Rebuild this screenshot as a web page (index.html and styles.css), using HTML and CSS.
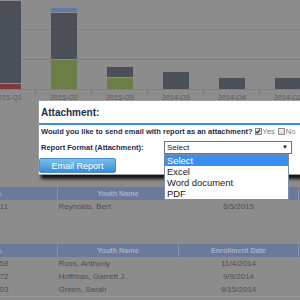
FILE: index.html
```html
<!DOCTYPE html>
<html lang="en">
<head>
  <meta charset="UTF-8">
  <meta name="viewport" content="width=device-width, initial-scale=1.0">
  <title>Enrollment Report</title>
  <link rel="stylesheet" href="styles.css">
</head>
<body>

  <div class="chart">
    <div class="plot">
      <div class="cat"><div class="bar">
        <div class="seg dark" style="height: 83px"></div>
        <div class="seg red" style="height: 6px"></div>
      </div></div>
      <div class="cat"><div class="bar">
        <div class="seg blue" style="height: 5px"></div>
        <div class="seg dark" style="height: 47px"></div>
        <div class="seg green" style="height: 30px"></div>
      </div></div>
      <div class="cat"><div class="bar">
        <div class="seg dark" style="height: 11px"></div>
        <div class="seg green" style="height: 12px"></div>
      </div></div>
      <div class="cat"><div class="bar">
        <div class="seg dark" style="height: 18px"></div>
      </div></div>
      <div class="cat"><div class="bar">
        <div class="seg dark" style="height: 12px"></div>
      </div></div>
      <div class="cat"><div class="bar">
        <div class="seg dark" style="height: 12px"></div>
      </div></div>
    </div>
    <div class="labels">
      <div class="label">2015-Q1</div>
      <div class="label">2015-Q2</div>
      <div class="label">2015-Q3</div>
      <div class="label">2014-Q3</div>
      <div class="label">2014-Q4</div>
      <div class="label">2014-Q2</div>
    </div>
  </div>

  <div class="tables">
    <table class="grid">
      <thead>
        <tr>
          <th class="c-id">No.</th>
          <th class="c-name">Youth Name</th>
          <th class="c-date">Enrollment Date</th>
          <th class="c-start">Start Date</th>
        </tr>
      </thead>
      <tbody>
        <tr>
          <td class="c-id">10011</td>
          <td class="c-name">Reynolds, Bert</td>
          <td class="c-date">6/5/2015</td>
          <td class="c-start">6/8/2015</td>
        </tr>
      </tbody>
    </table>

    <table class="grid second">
      <thead>
        <tr>
          <th class="c-id">No.</th>
          <th class="c-name">Youth Name</th>
          <th class="c-date">Enrollment Date</th>
          <th class="c-start">Start Date</th>
        </tr>
      </thead>
      <tbody>
        <tr>
          <td class="c-id">10158</td>
          <td class="c-name">Ross, Anthony</td>
          <td class="c-date">11/4/2014</td>
          <td class="c-start">11/18/2014</td>
        </tr>
        <tr>
          <td class="c-id">10172</td>
          <td class="c-name">Hoffman, Garrett J.</td>
          <td class="c-date">9/9/2014</td>
          <td class="c-start">9/16/2014</td>
        </tr>
        <tr>
          <td class="c-id">10203</td>
          <td class="c-name">Green, Sarah</td>
          <td class="c-date">9/15/2014</td>
          <td class="c-start">9/22/2014</td>
        </tr>
      </tbody>
    </table>
  </div>

  <div class="dialog">
    <div class="dialog-title">Attachment:</div>
    <div class="dialog-body">
      <div class="question">
        Would you like to send email with report as an attachment?
        <span class="check on">
          <svg width="7" height="7" viewBox="0 0 7 7"><path d="M1.2 3.6 L2.8 5.2 L5.9 1.3" fill="none" stroke="#222" stroke-width="1.3"/></svg>
        </span><span class="opt">Yes</span><span class="check"></span><span class="opt">No</span>
      </div>
      <div class="format">
        <span class="format-label">Report Format (Attachment):</span>
        <div class="select">
          Select<span class="arrow">&#9660;</span>
          <ul class="options">
            <li class="active">Select</li>
            <li>Excel</li>
            <li>Word document</li>
            <li>PDF</li>
          </ul>
        </div>
      </div>
      <button class="button">Email Report</button>
    </div>
  </div>

</body>
</html>
```

FILE: styles.css
```css
html, body {
  overflow: hidden;
}

body {
  font-family: "Liberation Sans", Arial, sans-serif;
  background-color: #8c8c8c;
  margin: 0;
  width: 300px;
  height: 300px;
  position: relative;
}

/* chart (behind the modal backdrop) */
.chart {
  margin-left: -20px;
}

.plot {
  display: flex;
  height: 90px;
  background: repeating-linear-gradient(to bottom, transparent 0 29px, #7f7f7f 29px 30px);
}

.cat {
  width: 56px;
  flex: none;
  display: flex;
  justify-content: center;
  align-items: flex-end;
  padding-bottom: 1px;
  box-sizing: border-box;
}

.bar {
  width: 26px;
  display: flex;
  flex-direction: column;
}

.seg {
  box-shadow: inset 0 1px 0 #8c8c8c;
}

.dark { background-color: #4a4f58; }
.red { background-color: #7b3b3f; }
.blue { background-color: #5b7ea9; }
.green { background-color: #6c7e48; }

.labels {
  display: flex;
}

.label {
  width: 56px;
  flex: none;
  text-align: center;
  font-size: 7.2px;
  line-height: 9px;
  padding-top: 3px;
  color: #5c5c5c;
  background: linear-gradient(#7a7a7a, #7a7a7a) right top / 1px 5px no-repeat;
}

/* tables */
.tables {
  margin-top: 85px;
  margin-left: -63px;
}

.grid {
  border-collapse: collapse;
  table-layout: fixed;
  width: 479px;
}

.grid.second {
  margin-top: 31px;
  border-bottom: 1px solid #9a9a9a;
}

.grid th {
  background-color: #6b7a9a;
  color: #a6b0c5;
  font-size: 7.2px;
  font-weight: bold;
  height: 13px;
  padding: 0;
  text-align: center;
  border-left: 1px solid #8693ad;
}

.grid th:first-child {
  border-left: none;
}

.grid td {
  font-size: 8px;
  color: #4f4f4f;
  height: 13px;
  padding: 0 1px;
  white-space: nowrap;
}

.c-id { width: 120px; text-align: center; }
.c-name { width: 120px; }
.c-date { width: 119px; }
.c-start { width: 120px; }

.grid td.c-date { text-align: center; }
.grid td.c-start { padding-left: 2px; }

/* modal */
.dialog {
  position: absolute;
  top: 100px;
  left: 38px;
  width: 280px;
  background-color: #fff;
  border: 1px solid #a0a0a0;
  box-shadow: 3px 4px 3px rgba(0, 0, 0, 0.85);
  color: #1d2b4c;
}

.dialog-title {
  font-size: 10px;
  font-weight: bold;
  height: 22px;
  line-height: 23px;
  padding-left: 2px;
  border-bottom: 2px solid #3a8fd8;
}

.dialog-body {
  padding: 1px 2px 1px 2px;
}

.question {
  display: flex;
  align-items: center;
  font-size: 7.5px;
  font-weight: bold;
  line-height: 11px;
  white-space: nowrap;
}

.check {
  width: 5px;
  height: 5px;
  margin-left: 2px;
  border: 1px solid #8a8a8a;
  background: linear-gradient(#f4f4f4, #d8d8d8);
  display: flex;
  flex: none;
}

.check svg {
  margin: -1px 0 0 -1px;
}

.opt {
  font-weight: normal;
  color: #777;
  margin-left: 1px;
  margin-right: 1px;
}

.format {
  display: flex;
  align-items: center;
  margin-top: 4px;
  font-size: 7.5px;
  font-weight: bold;
}

.format-label {
  width: 123px;
  flex: none;
}

.select {
  position: relative;
  width: 124px;
  height: 11px;
  border: 1px solid #707070;
  font-size: 8px;
  font-weight: normal;
  line-height: 11px;
  padding-left: 2px;
  box-sizing: content-box;
  color: #222;
}

.arrow {
  position: absolute;
  right: 3px;
  top: 0;
  font-size: 6px;
  color: #111;
}

.options {
  position: absolute;
  top: 12px;
  left: -1px;
  width: 123px;
  margin: 0;
  padding: 0;
  list-style: none;
  background-color: #fff;
  border: 1px solid #7a8ea8;
  font-size: 9.4px;
  line-height: 11px;
  color: #1a1a1a;
  z-index: 2;
}

.options li {
  padding-left: 2px;
}

.options li.active {
  background-color: #3a8ef2;
  color: #fff;
}

.button {
  display: block;
  margin: 4px 0 0 -2px;
  width: 77px;
  height: 15px;
  padding: 0;
  border: 1px solid #4a8ccb;
  border-radius: 2px;
  background: linear-gradient(#76c0f1, #3c8dd5);
  color: #fff;
  font-family: "Liberation Sans", Arial, sans-serif;
  font-size: 9px;
  cursor: pointer;
}
```
